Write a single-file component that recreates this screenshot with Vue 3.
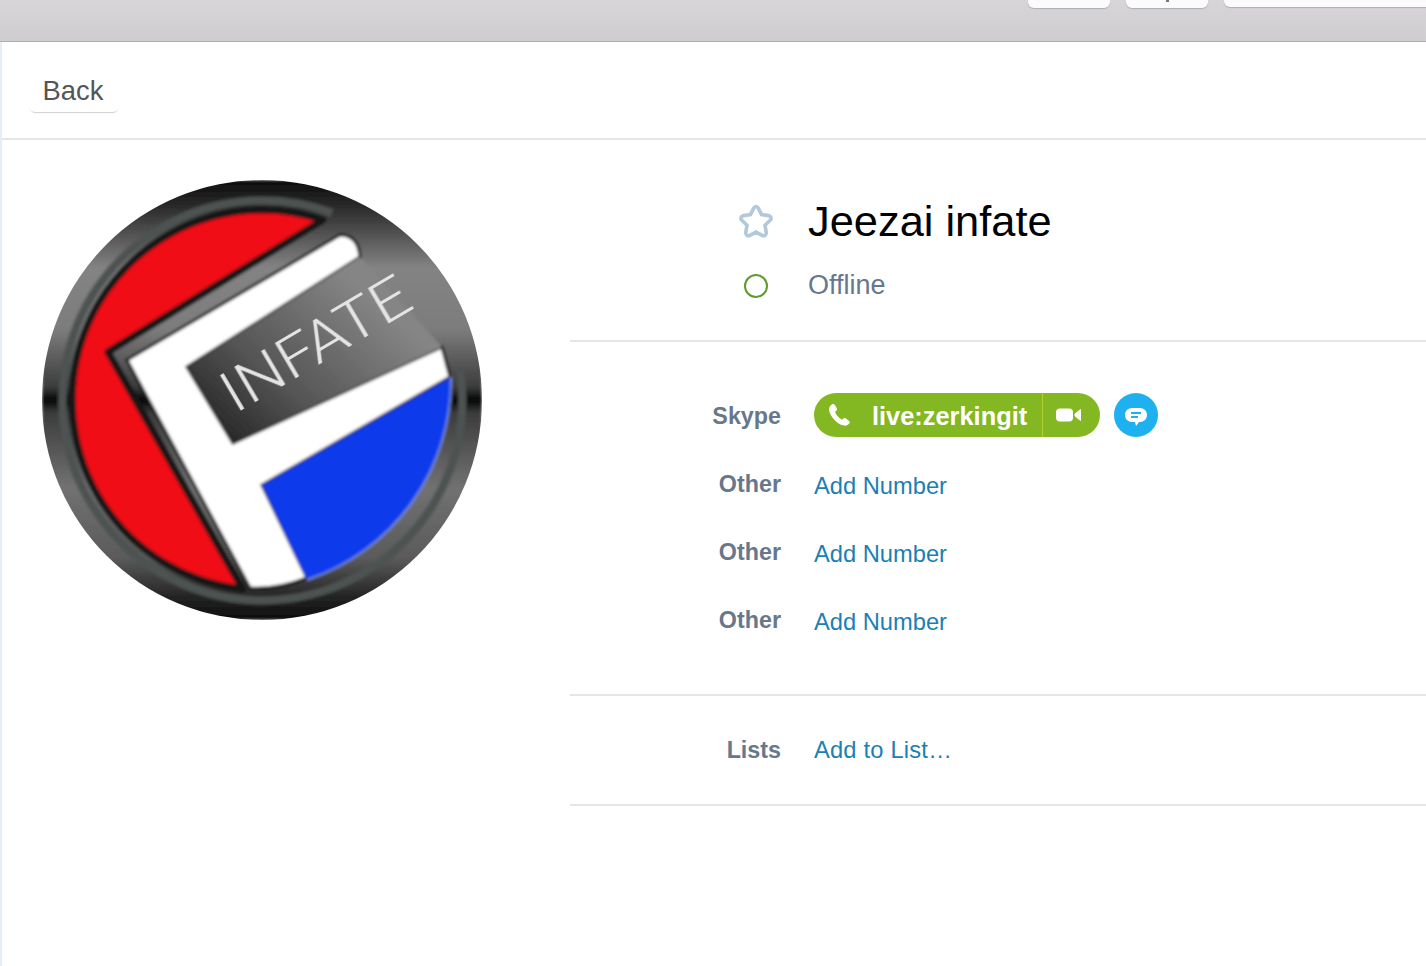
<script setup>
const rows = [
  { label: 'Other', text: 'Add Number' },
  { label: 'Other', text: 'Add Number' },
  { label: 'Other', text: 'Add Number' }
]
</script>

<template>
  <div class="page">
    <header class="topbar">
      <div class="tool tool-a"></div>
      <div class="tool tool-b"><span class="tick"></span></div>
      <div class="tool tool-c"></div>
    </header>
    <main class="panel">
      <div class="backrow">
        <button class="back">Back</button>
      </div>
      <div class="content">
        <div class="avatar-col">
          <svg class="avatar" width="440" height="440" viewBox="0 0 440 440">
            <defs>
              <clipPath id="disc"><circle cx="220" cy="220" r="220" /></clipPath>
              <linearGradient id="metal" x1="0" y1="0" x2="0" y2="1">
                <stop offset="0" stop-color="#0c0c0c" />
                <stop offset="0.06" stop-color="#2a2a2a" />
                <stop offset="0.2" stop-color="#838383" />
                <stop offset="0.34" stop-color="#7c7c7c" />
                <stop offset="0.47" stop-color="#3c3c3c" />
                <stop offset="0.5" stop-color="#060606" />
                <stop offset="0.53" stop-color="#3c3c3c" />
                <stop offset="0.7" stop-color="#717171" />
                <stop offset="0.86" stop-color="#5a5a5a" />
                <stop offset="0.95" stop-color="#222" />
                <stop offset="1" stop-color="#0c0c0c" />
              </linearGradient>
              <linearGradient id="plate" gradientUnits="userSpaceOnUse" x1="175" y1="255" x2="310" y2="100">
                <stop offset="0" stop-color="#262626" />
                <stop offset="0.4" stop-color="#555" />
                <stop offset="1" stop-color="#858585" />
              </linearGradient>
              <filter id="soft" x="-5%" y="-5%" width="110%" height="110%">
                <feGaussianBlur stdDeviation="1.800" />
              </filter>
              <filter id="softer" x="-5%" y="-5%" width="110%" height="110%">
                <feGaussianBlur stdDeviation="0.600" />
              </filter>
            </defs>
            <g clip-path="url(#disc)">
              <g filter="url(#soft)">
                <rect width="440" height="440" fill="url(#metal)" />
                <path d="M290 33A200 200 0 1 0 418 190" fill="none" stroke="#4d5351" stroke-width="8" />
                <path d="M281 40A190 190 0 1 0 200.800 409L66 172Z" fill="#f00c16" stroke="#161616" stroke-width="7" stroke-linejoin="round" />
                <path d="M85 180L298 55Q316 55 318 77L145 187L191 263L400 167L408 197L220 305L265 398Q235 410 208 408Z" fill="#fff" stroke="#141414" stroke-width="3" />
                <path d="M145 187L318 77L400 167L191 263Z" fill="url(#plate)" />
                <path d="M220 305L409 197A210 210 0 0 1 265 400Z" fill="#0e3bec" />
                <path d="M409 197A210 210 0 0 1 265 400" fill="none" stroke="#6f8ad8" stroke-width="2" />
              </g>
              <text filter="url(#softer)" x="193" y="234" transform="rotate(-30.500 193 234)" textLength="210" lengthAdjust="spacingAndGlyphs" class="logo-text">INFATE</text>
            </g>
          </svg>
        </div>
        <div class="details">
          <section class="identity">
            <div class="id-row name-row">
              <span class="id-icon">
                <svg width="38" height="36" viewBox="0 0 38 36">
                  <path d="M19 3.500c1 0 1.800.6 2.300 1.600l3.200 6.500 7 1c2.500.4 3.400 3 1.600 4.700l-5.100 5 1.200 7.100c.4 2.400-2 4.100-4.100 3l-6.100-3.300-6.100 3.300c-2.100 1.100-4.500-.6-4.100-3l1.200-7.100-5.100-5c-1.800-1.700-.9-4.300 1.600-4.700l7-1 3.200-6.500c.5-1 1.300-1.600 2.300-1.600z" fill="none" stroke="#b3c8da" stroke-width="3.600" />
                </svg>
              </span>
              <h1 class="name">Jeezai infate</h1>
            </div>
            <div class="id-row status-row">
              <span class="id-icon"><span class="presence"></span></span>
              <span class="status">Offline</span>
            </div>
          </section>
          <section class="numbers">
            <div class="row">
              <span class="label">Skype</span>
              <div class="value actions">
                <div class="pill">
                  <span class="pill-main">
                    <svg class="phone" width="24" height="24" viewBox="0 0 24 24">
                      <path d="M5.200 1.200c.9-.5 2-.3 2.500.6l2.100 3.500c.5.8.3 1.800-.4 2.400L8 8.800c.9 2.900 3.900 6.500 7 8l1.400-1.300c.7-.6 1.700-.7 2.500-.1l3.200 2.500c.8.600.9 1.800.2 2.600-1.200 1.400-3 2.400-5 2.100C10.300 21.500 3 13.600 2 7 1.700 4.500 3.200 2.400 5.200 1.200z" fill="#fff" />
                    </svg>
                    <span class="pill-text">live:zerkingit</span>
                  </span>
                  <span class="pill-video">
                    <svg width="25" height="14" viewBox="0 0 25 14">
                      <rect x="0" y="0.500" width="17" height="13" rx="4" fill="#fff" />
                      <path d="M19 6L24.500 1.500V12.500L19 8Z" fill="#fff" stroke="#fff" stroke-width="1" stroke-linejoin="round" />
                    </svg>
                  </span>
                </div>
                <span class="chat">
                  <svg width="24" height="24" viewBox="0 0 24 24">
                    <path d="M8 5h8c4 0 7 3 7 7s-3 7-7 7h-1l-3 4-1-4H8c-4 0-7-3-7-7s3-7 7-7z" fill="#fff" />
                    <path d="M7 10h10M7 14h7" stroke="#1fb0ef" stroke-width="2" />
                  </svg>
                </span>
              </div>
            </div>
            <div class="row" v-for="(row, i) in rows" :key="i">
              <span class="label">{{ row.label }}</span>
              <a class="value link">{{ row.text }}</a>
            </div>
          </section>
          <section class="lists">
            <div class="row">
              <span class="label">Lists</span>
              <a class="value link list-link">Add to List…</a>
            </div>
          </section>
        </div>
      </div>
    </main>
  </div>
</template>

<style>
html, body { margin: 0; background: #fff; overflow: hidden; }
</style>

<style scoped>
.page {
  width: 1426px;
  height: 966px;
  display: flex;
  flex-direction: column;
  overflow: hidden;
  font-family: "Liberation Sans", Arial, sans-serif;
  background: #fff;
}
.topbar {
  box-sizing: border-box;
  height: 42px;
  flex: none;
  display: flex;
  align-items: flex-start;
  background: linear-gradient(#d7d5d8, #cfcdd0);
  border-bottom: 1px solid #aeadaf;
  padding-left: 1028px;
  overflow: hidden;
}
.tool {
  height: 8px;
  flex: none;
  box-sizing: border-box;
  background: #fbfbfb;
  border-radius: 0 0 6px 6px;
  box-shadow: 0 1px 1px #aeadb0;
  display: flex;
  justify-content: center;
}
.tool-a { width: 82px; margin-right: 16px; }
.tool-b { width: 82px; margin-right: 16px; }
.tool-c { width: 260px; height: 7px; }
.tick { width: 3px; height: 2px; background: #777; }
.panel {
  flex: 1;
  border-left: 2px solid #e3eef6;
  display: flex;
  flex-direction: column;
}
.backrow {
  box-sizing: border-box;
  height: 98px;
  flex: none;
  border-bottom: 2px solid #e5e5e5;
  padding: 27px 0 0 27px;
}
.back {
  display: block;
  width: 90px;
  height: 43px;
  padding: 1px 2px 0 0;
  border: 0;
  background: #fff;
  border-radius: 6px;
  box-shadow: 0 2px 1px -1px #cfcfcf;
  font: 27.400px "Liberation Sans", Arial, sans-serif;
  color: #555;
}
.content { flex: 1; display: flex; }
.avatar-col { width: 568px; flex: none; padding: 40px 0 0 40px; box-sizing: border-box; }
.avatar { display: block; }
.logo-text {
  font-family: Roboto, "Liberation Sans", sans-serif;
  font-weight: 300;
  font-size: 58px;
  fill: #e4e4e4;
}
.details { flex: 1; min-width: 0; }
.identity {
  box-sizing: border-box;
  height: 202px;
  border-bottom: 2px solid #e5e5e5;
  padding-top: 52px;
}
.id-row { display: flex; align-items: center; }
.id-icon { width: 238px; flex: none; padding-left: 167px; box-sizing: border-box; display: flex; justify-content: flex-start; }
.name-row { height: 58px; }
.status-row { height: 46px; margin-top: 12px; }
.name { margin: 0; font-size: 43.400px; font-weight: 400; color: #000; line-height: 58px; }
.presence { width: 24px; height: 24px; margin: 1px 0 0 7px; box-sizing: border-box; border: 2px solid #5f9a2e; border-radius: 50%; }
.status { font-size: 27px; color: #67778c; }
.numbers {
  box-sizing: border-box;
  height: 354px;
  border-bottom: 2px solid #e5e5e5;
  padding-top: 40px;
}
.lists {
  box-sizing: border-box;
  height: 110px;
  border-bottom: 2px solid #e5e5e5;
  padding-top: 20px;
}
.row { display: flex; align-items: center; height: 68px; }
.label {
  width: 211px;
  flex: none;
  text-align: right;
  font-size: 23.300px;
  font-weight: 700;
  color: #67778c;
}
.value { margin-left: 33px; }
.link { font-size: 23.700px; color: #1a80b4; padding-top: 4px; }
.list-link { padding-top: 0; letter-spacing: 0.2px; }
.actions { display: flex; align-items: center; gap: 14px; margin-bottom: 2px; }
.pill {
  width: 286px;
  height: 44px;
  box-sizing: border-box;
  display: flex;
  background: #84b822;
  border-radius: 22px;
  color: #fff;
}
.pill-main { width: 228px; flex: none; display: flex; align-items: center; padding-left: 13px; box-sizing: border-box; }
.phone { flex: none; }
.pill-text { margin-left: 21px; padding-top: 3px; font-size: 25.400px; font-weight: 700; white-space: nowrap; }
.pill-video {
  flex: 1;
  border-left: 1px solid #b5cf2e;
  display: flex;
  align-items: center;
  padding-left: 13px;
}
.chat {
  width: 44px;
  height: 44px;
  border-radius: 50%;
  background: #1fb0ef;
  display: flex;
  align-items: center;
  justify-content: center;
}
</style>
